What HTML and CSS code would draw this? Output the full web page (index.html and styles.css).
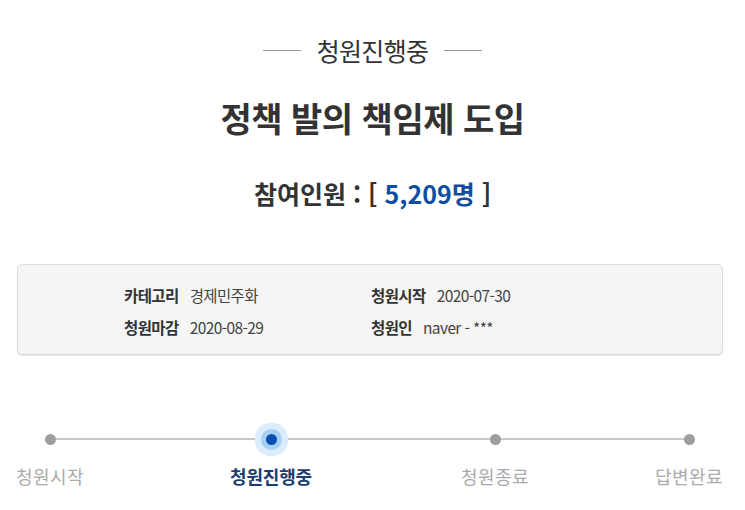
FILE: index.html
```html
<!DOCTYPE html>
<html lang="ko">
<head>
  <meta charset="UTF-8" />
  <title>청원진행중 - 정책 발의 책임제 도입</title>
  <link rel="stylesheet" href="styles.css">
</head>
<body>
  <!-- Petition header -->
  <header class="petition-head">
    <p class="status-tag"><span>청원진행중</span></p>
    <h1 class="petition-title">정책 발의 책임제 도입</h1>
    <p class="petition-count">참여인원 : [ <span class="count-num">5,209명</span> ]</p>
  </header>

  <!-- Petition info -->
  <section class="info-box">
    <dl class="info-grid">
      <div class="info-item"><dt>카테고리</dt><dd>경제민주화</dd></div>
      <div class="info-item"><dt>청원시작</dt><dd>2020-07-30</dd></div>
      <div class="info-item"><dt>청원마감</dt><dd>2020-08-29</dd></div>
      <div class="info-item"><dt>청원인</dt><dd>naver - ***</dd></div>
    </dl>
  </section>

  <!-- Progress steps -->
  <ol class="steps">
    <li class="step"><span class="dot"></span><span class="step-label">청원시작</span></li>
    <li class="step active"><span class="dot"></span><span class="step-label">청원진행중</span></li>
    <li class="step"><span class="dot"></span><span class="step-label">청원종료</span></li>
    <li class="step"><span class="dot"></span><span class="step-label">답변완료</span></li>
  </ol>
</body>
</html>
```

FILE: styles.css
```css
body {
  margin: 0;
  padding: 0;
  background: #fff;
  color: #333;
  font-family: "Noto Sans CJK KR", "Noto Sans", sans-serif;
}

.petition-head {
  text-align: center;
  padding-top: 35px;
}

.status-tag {
  margin: 0;
  display: flex;
  justify-content: center;
  align-items: center;
  gap: 16px;
  font-size: 25px;
  line-height: 30px;
  letter-spacing: -0.7px;
  color: #333;
}

.status-tag::before,
.status-tag::after {
  content: "";
  width: 38px;
  height: 1px;
  background: #999;
}

.petition-title {
  margin: 33px 0 0;
  font-size: 34px;
  line-height: 40px;
  font-weight: bold;
  color: #333;
  letter-spacing: -0.5px;
}

.petition-count {
  margin: 38px 0 0;
  font-size: 25px;
  line-height: 34px;
  font-weight: bold;
  color: #333;
}

.count-num {
  color: #0d4ea3;
}

.info-box {
  margin: 54px 22px 0 17px;
  background: #f5f5f5;
  border: 1px solid #dcdcdc;
  border-radius: 5px;
  box-shadow: 0 1px 1px #e6e6e6;
  padding: 14px 0 11px 106px;
}

.info-grid {
  margin: 0;
  display: grid;
  grid-template-columns: 247px auto;
}

.info-item {
  display: flex;
  gap: 11px;
  font-size: 15.5px;
  line-height: 32px;
  letter-spacing: -0.6px;
}

.info-item dt {
  font-weight: bold;
  color: #333;
}

.info-item dd {
  margin: 0;
  color: #444;
}

.steps {
  list-style: none;
  margin: 68px 0 0;
  padding: 0 0 0 5px;
  display: flex;
  position: relative;
}

.steps::before {
  content: "";
  position: absolute;
  left: 50px;
  width: 639px;
  top: 15px;
  height: 2px;
  background: #c9c9c9;
}

.step {
  width: 90px;
  display: flex;
  flex-direction: column;
  align-items: center;
}

.step:nth-child(2) { margin-left: 131px; }
.step:nth-child(3) { margin-left: 134px; }
.step:nth-child(4) { margin-left: 104px; }

.dot {
  height: 32px;
  display: flex;
  align-items: center;
  justify-content: center;
  position: relative;
}

.dot::after {
  content: "";
  width: 11px;
  height: 11px;
  border-radius: 50%;
  background: #9e9e9e;
}

.active .dot::after {
  background: #0a4fae;
  box-shadow: 0 0 0 5px #a6d0f7, 0 0 0 11px #dbecfc;
}

.step-label {
  margin-top: 8px;
  font-size: 18px;
  line-height: 26px;
  letter-spacing: 0.4px;
  color: #aaa;
  white-space: nowrap;
}

.active .step-label {
  font-weight: bold;
  color: #1d3c70;
  letter-spacing: -0.2px;
}
```
